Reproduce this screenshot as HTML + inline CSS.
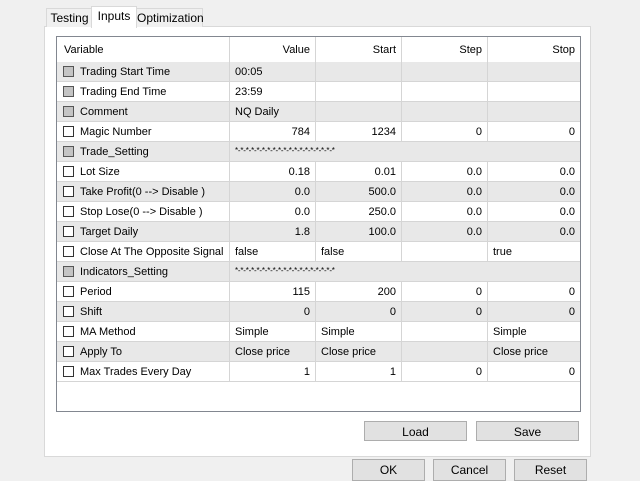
<!DOCTYPE html>
<html><head><style>
body{margin:0;width:640px;height:480px;background:#f0f0f0;font-family:"Liberation Sans",Arial,sans-serif;font-size:11px;color:#000;position:relative;overflow:hidden}
.tab{position:absolute;height:18px;line-height:19px;border:1px solid #d9d9d9;border-bottom:none;background:#f0f0f0;text-align:center;font-size:12px}
.panel{position:absolute;left:44px;top:26px;width:545px;height:429px;background:#fff;border:1px solid #d9d9d9}
.tbl{position:absolute;left:56px;top:36px;width:523px;height:374px;border:1px solid #828790;background:#fff}
.row{position:absolute;left:0;width:523px;height:19px;border-bottom:1px solid #d5d5d5;line-height:21px}
.g{background:#e8e8e8}
.c{position:absolute;top:0;height:19px;border-right:1px solid #d5d5d5;box-sizing:border-box;padding:0 5px;white-space:nowrap;overflow:hidden}
.r{text-align:right}
.cb{position:absolute;left:6px;top:4px;width:9px;height:9px;border:1px solid #333;background:#fff}
.cb.d{background:#c4c4c4;border-color:#555}
.btn{position:absolute;height:20px;line-height:20px;text-align:center;background:#e1e1e1;border:1px solid #adadad;box-sizing:border-box;font-size:12px}
</style></head><body>
<div class="panel"></div>
<div class="tab" style="left:46px;top:8px;width:45px">Testing</div>
<div class="tab" style="left:91px;top:6px;width:44px;height:21px;background:#fff;z-index:2">Inputs</div>
<div class="tab" style="left:136px;top:8px;width:65px">Optimization</div>
<div class="tbl">
<div class="row" style="top:0;height:25px;line-height:27px">
<div class="c" style="left:0;width:173px;height:25px;padding-left:7px">Variable</div>
<div class="c r" style="left:173px;width:86px;height:25px">Value</div>
<div class="c r" style="left:259px;width:86px;height:25px">Start</div>
<div class="c r" style="left:345px;width:86px;height:25px">Step</div>
<div class="c r" style="left:431px;width:92px;height:25px;border:none">Stop</div>
</div>
<div id="rows"></div>
</div>
<script>
var d=[
["Trading Start Time",1,"00:05","","","",0],
["Trading End Time",1,"23:59","","","",0],
["Comment",1,"NQ Daily","","","",0],
["Magic Number",0,"784","1234","0","0",1],
["Trade_Setting",1,"*-*-*-*-*-*-*-*-*-*-*-*-*-*-*-*-*-*-*","","","",2],
["Lot Size",0,"0.18","0.01","0.0","0.0",1],
["Take Profit(0 --> Disable )",0,"0.0","500.0","0.0","0.0",1],
["Stop Lose(0 --> Disable )",0,"0.0","250.0","0.0","0.0",1],
["Target Daily",0,"1.8","100.0","0.0","0.0",1],
["Close At The Opposite Signal",0,"false","false","","true",0],
["Indicators_Setting",1,"*-*-*-*-*-*-*-*-*-*-*-*-*-*-*-*-*-*-*","","","",2],
["Period",0,"115","200","0","0",1],
["Shift",0,"0","0","0","0",1],
["MA Method",0,"Simple","Simple","","Simple",0],
["Apply To",0,"Close price","Close price","","Close price",0],
["Max Trades Every Day",0,"1","1","0","0",1]];
var h="";
d.forEach(function(r,i){
var t=25+i*20,cl=i%2==0?" g":"",rc=r[6]==1?" r":"";
h+='<div class="row'+cl+'" style="top:'+t+'px"><div class="c" style="left:0;width:173px;padding-left:23px"><span class="cb'+(r[1]?' d':'')+'"></span>'+r[0]+'</div>';
if(r[6]==2){h+='<div class="c" style="left:173px;width:350px;border:none;font-size:8px;letter-spacing:-0.2px;line-height:18px">'+r[2]+'</div>';}
else{h+='<div class="c'+rc+'" style="left:173px;width:86px">'+r[2]+'</div><div class="c'+rc+'" style="left:259px;width:86px">'+r[3]+'</div><div class="c'+rc+'" style="left:345px;width:86px">'+r[4]+'</div><div class="c'+rc+'" style="left:431px;width:92px;border:none">'+r[5]+'</div>';}
h+='</div>';});
document.getElementById("rows").innerHTML=h;
</script>
<div class="btn" style="left:364px;top:421px;width:103px">Load</div>
<div class="btn" style="left:476px;top:421px;width:103px">Save</div>
<div class="btn" style="left:352px;top:459px;width:73px;height:22px">OK</div>
<div class="btn" style="left:433px;top:459px;width:73px;height:22px">Cancel</div>
<div class="btn" style="left:514px;top:459px;width:73px;height:22px">Reset</div>
</body></html>
